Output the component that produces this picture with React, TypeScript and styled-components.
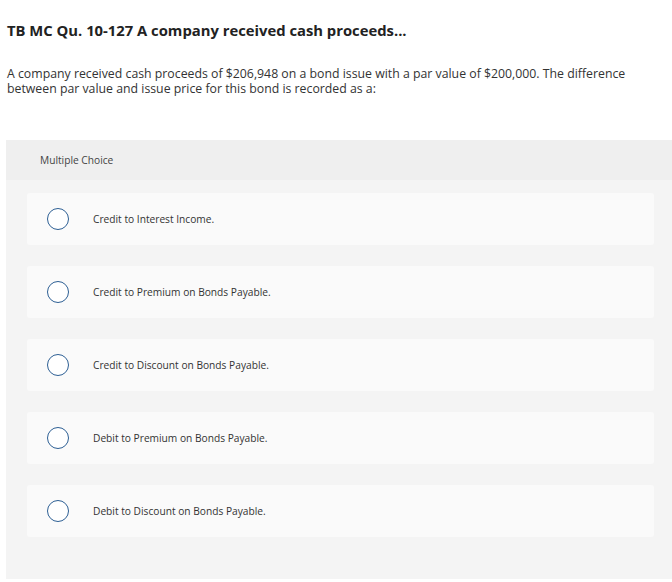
import { createGlobalStyle, styled } from "styled-components";

const GlobalStyle = createGlobalStyle`
  body {
    margin: 0;
    background: #ffffff;
    font-family: "Open Sans", "Liberation Sans", sans-serif;
    color: #333333;
  }
`;

const options = [
  "Credit to Interest Income.",
  "Credit to Premium on Bonds Payable.",
  "Credit to Discount on Bonds Payable.",
  "Debit to Premium on Bonds Payable.",
  "Debit to Discount on Bonds Payable.",
];

const App = () => {
  return (
    <>
      <GlobalStyle />
      <Page>
        <Title>TB MC Qu. 10-127 A company received cash proceeds...</Title>
        <Question>
          A company received cash proceeds of $206,948 on a bond issue with a par value of
          $200,000. The difference between par value and issue price for this bond is recorded
          as a:
        </Question>
        <Panel>
          <PanelHeader>Multiple Choice</PanelHeader>
          <OptionList>
            {options.map((text) => (
              <Option key={text}>
                <Radio />
                <OptionText>{text}</OptionText>
              </Option>
            ))}
          </OptionList>
        </Panel>
      </Page>
    </>
  );
};

export default App;

const Page = styled.div`
  padding: 20px 0 0 6px;
`;

const Title = styled.h1`
  margin: 0 0 0 1px;
  font-size: 14.8px;
  font-weight: 700;
  line-height: 20px;
  color: #222222;
`;

const Question = styled.p`
  margin: 26px 40px 0 1px;
  font-size: 12.3px;
  line-height: 15px;
  color: #333333;
`;

const Panel = styled.div`
  margin-top: 44px;
  height: 439px;
  background: #f4f4f4;
`;

const PanelHeader = styled.div`
  height: 40px;
  display: flex;
  align-items: center;
  padding-left: 34px;
  background: #efefef;
  font-size: 10.2px;
  color: #444444;
`;

const OptionList = styled.div`
  display: flex;
  flex-direction: column;
  gap: 21px;
  padding: 13px 18px 0 21px;
`;

const Option = styled.div`
  height: 52px;
  display: flex;
  align-items: center;
  padding-left: 20px;
  background: #fafafa;
  border-radius: 3px;
`;

const Radio = styled.span`
  width: 20px;
  height: 20px;
  border: 1.3px solid #2d5f94;
  border-radius: 50%;
  background: #ffffff;
  flex-shrink: 0;
`;

const OptionText = styled.span`
  margin-left: 24px;
  font-size: 10.2px;
  color: #333333;
`;
